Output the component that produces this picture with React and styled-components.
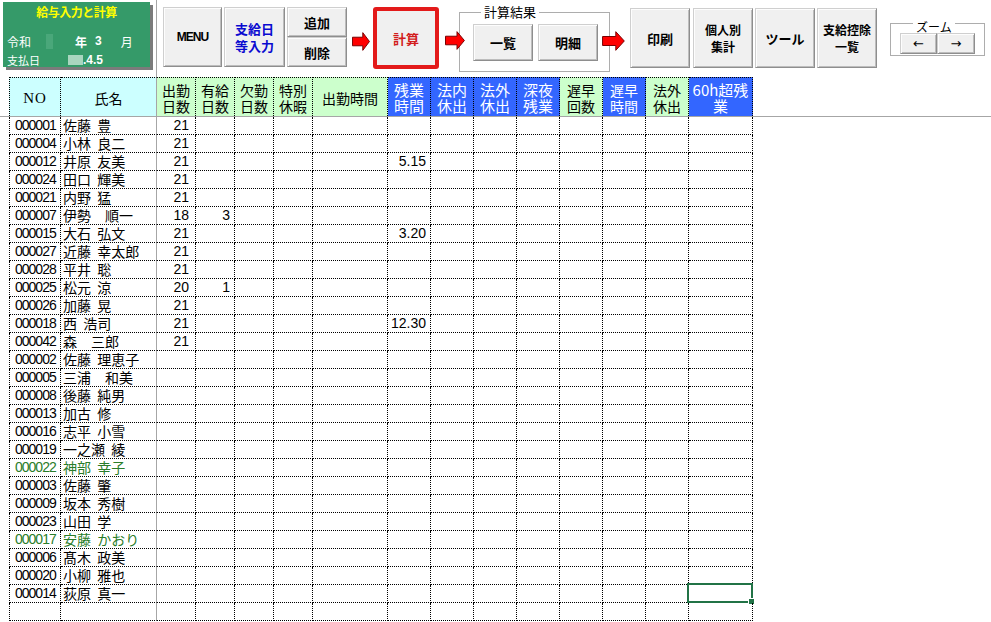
import React from 'react';
import styled, { createGlobalStyle } from 'styled-components';

const Global = createGlobalStyle`
  html, body { margin: 0; padding: 0; background: #fff; }
  body {
    font-family: "Noto Sans CJK JP", "Noto Sans", sans-serif;
    overflow: hidden;
  }
`;

const CJK = '"Noto Sans CJK JP", "Noto Sans", sans-serif';
const DOTTED = '1px dotted #000';
const FREEZE = '1px solid #a6a6a6';
const COLS =
  '9px 52px 96px 39px 39px 39px 39px 75px 43px 43px 43px 43px 43px 43px 43px 64px 1fr';

const Page = styled.div`
  width: 991px;
  height: 622px;
  overflow: hidden;
  background: #fff;
`;

/* ---------- top area ---------- */

const TopArea = styled.div`
  display: flex;
  height: 77px;
`;

const LeftPane = styled.div`
  flex: none;
  width: 157px;
  box-sizing: border-box;
  border-right: ${FREEZE};
  padding: 2px 0 0 3px;
`;

const TitlePanel = styled.div`
  width: 147px;
  height: 65px;
  background: #359a69;
  box-shadow: 3px 3px 0 #7b7b7b;
  color: #fff;
  display: flex;
  flex-direction: column;
  font-family: ${CJK};
`;

const PanelTitle = styled.div`
  height: 20px;
  line-height: 20px;
  text-align: center;
  color: #ffff00;
  font-weight: 700;
  font-size: 12px;
  letter-spacing: -0.5px;
`;

const PanelLine = styled.div`
  display: flex;
  align-items: center;
  height: ${(p) => p.$h}px;
  margin-top: ${(p) => p.$mt || 0}px;
  padding-left: 4px;
  font-size: 12px;
`;

const PanelText = styled.span`
  margin-left: ${(p) => p.$ml || 0}px;
  font-weight: ${(p) => (p.$bold ? 700 : 400)};
  font-size: ${(p) => p.$fs || 12}px;
  font-family: ${(p) => (p.$latin ? '"Liberation Sans", sans-serif' : CJK)};
`;

const HiddenValue = styled.span`
  display: inline-block;
  width: ${(p) => p.$w}px;
  height: ${(p) => p.$h}px;
  margin-left: ${(p) => p.$ml || 0}px;
  background: ${(p) => p.$bg};
`;

const Toolbar = styled.div`
  flex: 1;
  display: flex;
  align-items: flex-start;
  padding-left: 6px;
`;

const Btn = styled.button`
  flex: none;
  box-sizing: border-box;
  width: ${(p) => p.$w}px;
  height: ${(p) => p.$h}px;
  margin-top: ${(p) => p.$top || 0}px;
  margin-left: ${(p) => p.$ml || 0}px;
  padding: 0;
  background: #f0f0f0;
  border: 1px solid;
  border-color: #cfcfcf #8e8e8e #8e8e8e #cfcfcf;
  box-shadow: inset 1px 1px 0 #fdfdfd, inset -1px -1px 0 #bdbdbd;
  color: ${(p) => p.$color || '#000'};
  font-family: ${CJK};
  font-weight: 700;
  font-size: ${(p) => p.$fs || 13}px;
  line-height: 17px;
  display: flex;
  flex-direction: column;
  align-items: center;
  justify-content: center;
  white-space: nowrap;
`;

const MenuLabel = styled.span`
  font-family: "Liberation Sans", sans-serif;
  font-size: 12px;
  letter-spacing: -1px;
`;

const CalcBtn = styled(Btn)`
  border: 4px solid #e31a1a;
  border-radius: 3px;
  box-shadow: none;
`;

const Stack = styled.div`
  flex: none;
  display: flex;
  flex-direction: column;
  margin-top: ${(p) => p.$top}px;
  margin-left: ${(p) => p.$ml}px;
`;

const ArrowBox = styled.svg`
  flex: none;
  position: relative;
  z-index: 1;
  width: ${(p) => p.$w}px;
  height: ${(p) => p.$h}px;
  margin-top: ${(p) => p.$top}px;
  margin-left: ${(p) => p.$ml || 0}px;
  margin-right: ${(p) => p.$mr || 0}px;
`;

const Arrow = (props) => (
  <ArrowBox viewBox="0 0 20 20" preserveAspectRatio="none" {...props}>
    <path
      d="M0.5 5.5 H12 V0.7 L19.4 10 L12 19.3 V14.5 H0.5 Z"
      fill="#ff0000"
      stroke="#7a0000"
      strokeWidth="1"
      vectorEffect="non-scaling-stroke"
    />
  </ArrowBox>
);

const Group = styled.fieldset`
  flex: none;
  box-sizing: border-box;
  width: ${(p) => p.$w}px;
  height: ${(p) => p.$h}px;
  margin: ${(p) => p.$top}px 0 0 ${(p) => p.$ml || 0}px;
  padding: ${(p) => p.$pad};
  min-width: 0;
  border: 1px solid #adadad;
  display: flex;
  gap: ${(p) => p.$gap}px;
  align-items: flex-start;
`;

const Legend = styled.legend`
  margin-left: ${(p) => p.$ml}px;
  padding: ${(p) => p.$pt || 0}px 3px 0;
  font-family: ${CJK};
  font-size: ${(p) => p.$fs}px;
  line-height: ${(p) => p.$lh}px;
  color: #000;
`;

const ZoomBtn = styled(Btn)`
  font-family: "DejaVu Sans", sans-serif;
  font-weight: 400;
  font-size: 13px;
`;

/* ---------- sheet ---------- */

const HeaderRow = styled.div`
  display: grid;
  grid-template-columns: ${COLS};
  height: 40px;
  box-sizing: border-box;
  border-bottom: ${FREEZE};
`;

const HeadCell = styled.div`
  box-sizing: border-box;
  border-top: ${DOTTED};
  border-left: ${(p) => (p.$first ? DOTTED : '0')};
  border-right: ${(p) => (p.$freeze ? FREEZE : DOTTED)};
  background: ${(p) => p.$bg};
  color: ${(p) => p.$fg};
  font-family: ${(p) => (p.$serif ? '"Liberation Serif", serif' : CJK)};
  font-size: ${(p) => p.$fs}px;
  letter-spacing: ${(p) => (p.$serif ? '1px' : '0')};
  line-height: 16px;
  padding-top: 1px;
  display: flex;
  flex-direction: column;
  align-items: center;
  justify-content: center;
  white-space: nowrap;
`;

const Spacer = styled.div``;

const DataRow = styled.div`
  display: grid;
  grid-template-columns: ${COLS};
  height: 18px;
`;

const Cell = styled.div`
  position: relative;
  box-sizing: border-box;
  height: 18px;
  border-bottom: ${DOTTED};
  border-left: ${(p) => (p.$first ? DOTTED : '0')};
  border-right: ${(p) => (p.$freeze ? FREEZE : DOTTED)};
  padding: 0 ${(p) => p.$pr || 0}px 0 ${(p) => p.$pl || 0}px;
  text-align: ${(p) => p.$align || 'left'};
  color: ${(p) => p.$color || '#000'};
  font-family: ${(p) => (p.$num ? '"Liberation Sans", sans-serif' : CJK)};
  font-size: 14px;
  letter-spacing: ${(p) => p.$ls || 0}px;
  word-spacing: ${(p) => p.$ws || 0}px;
  line-height: 17px;
  white-space: nowrap;
`;

const Selection = styled.div`
  position: absolute;
  top: -2px;
  left: -2px;
  right: -1px;
  bottom: -1px;
  border: 2px solid #217346;
  pointer-events: none;
`;

const FillHandle = styled.div`
  position: absolute;
  right: -3px;
  bottom: -3px;
  width: 5px;
  height: 5px;
  background: #217346;
  box-shadow: 0 0 0 1px #fff;
`;

const CYAN = '#ccffff';
const GREEN = '#ccffcc';
const BLUE = '#3366ff';

const headers = [
  { lines: ['NO'], bg: CYAN, serif: true, fs: 15 },
  { lines: ['氏名'], bg: CYAN, freeze: true },
  { lines: ['出勤', '日数'], bg: GREEN },
  { lines: ['有給', '日数'], bg: GREEN },
  { lines: ['欠勤', '日数'], bg: GREEN },
  { lines: ['特別', '休暇'], bg: GREEN },
  { lines: ['出勤時間'], bg: GREEN },
  { lines: ['残業', '時間'], bg: BLUE, fs: 15 },
  { lines: ['法内', '休出'], bg: BLUE, fs: 15 },
  { lines: ['法外', '休出'], bg: BLUE, fs: 15 },
  { lines: ['深夜', '残業'], bg: BLUE, fs: 15 },
  { lines: ['遅早', '回数'], bg: GREEN },
  { lines: ['遅早', '時間'], bg: BLUE },
  { lines: ['法外', '休出'], bg: GREEN },
  { lines: ['60h超残', '業'], bg: BLUE, fs: 15 },
];

const employees = [
  { id: '000001', name: '佐藤 豊', days: '21' },
  { id: '000004', name: '小林 良二', days: '21' },
  { id: '000012', name: '井原 友美', days: '21', over: '5.15' },
  { id: '000024', name: '田口 輝美', days: '21' },
  { id: '000021', name: '内野 猛', days: '21' },
  { id: '000007', name: '伊勢　順一', days: '18', paid: '3' },
  { id: '000015', name: '大石 弘文', days: '21', over: '3.20' },
  { id: '000027', name: '近藤 幸太郎', days: '21' },
  { id: '000028', name: '平井 聡', days: '21' },
  { id: '000025', name: '松元 涼', days: '20', paid: '1' },
  { id: '000026', name: '加藤 晃', days: '21' },
  { id: '000018', name: '西 浩司', days: '21', over: '12.30' },
  { id: '000042', name: '森　三郎', days: '21' },
  { id: '000002', name: '佐藤 理恵子' },
  { id: '000005', name: '三浦　和美' },
  { id: '000008', name: '後藤 純男' },
  { id: '000013', name: '加古 修' },
  { id: '000016', name: '志平 小雪' },
  { id: '000019', name: '一之瀬 綾' },
  { id: '000022', name: '神部 幸子', retired: true },
  { id: '000003', name: '佐藤 肇' },
  { id: '000009', name: '坂本 秀樹' },
  { id: '000023', name: '山田 学' },
  { id: '000017', name: '安藤 かおり', retired: true },
  { id: '000006', name: '髙木 政美' },
  { id: '000020', name: '小柳 雅也' },
  { id: '000014', name: '荻原 真一' },
  { id: '', name: '' },
];

const ACTIVE_ROW = 26;
const ACTIVE_COL = 14;

function SheetRow({ emp, index }) {
  const color = emp.retired ? '#2a7d2a' : '#000';
  const values = [];
  for (let c = 2; c < 15; c += 1) {
    let v = '';
    if (c === 2) v = emp.days || '';
    if (c === 3) v = emp.paid || '';
    if (c === 7) v = emp.over || '';
    values.push(v);
  }
  return (
    <DataRow>
      <Spacer />
      <Cell $first $num $pl={5} $ls={-1} $color={color}>
        {emp.id}
      </Cell>
      <Cell $freeze $pl={2} $ws={3} $color={color}>
        {emp.name}
      </Cell>
      {values.map((v, i) => {
        const col = i + 2;
        const active = index === ACTIVE_ROW && col === ACTIVE_COL;
        return (
          <Cell key={col} $num $align="right" $pr={col === 2 ? 6 : 4}>
            {v}
            {active && (
              <Selection>
                <FillHandle />
              </Selection>
            )}
          </Cell>
        );
      })}
      <Spacer />
    </DataRow>
  );
}

export default function App() {
  return (
    <Page>
      <Global />
      <TopArea>
        <LeftPane>
          <TitlePanel>
            <PanelTitle>給与入力と計算</PanelTitle>
            <PanelLine $h={22} $mt={8}>
              <PanelText>令和</PanelText>
              <HiddenValue $w={7} $h={15} $ml={15} $bg="#4aa77a" />
              <PanelText $bold $ml={22}>年</PanelText>
              <PanelText $bold $latin $ml={8}>3</PanelText>
              <PanelText $ml={19}>月</PanelText>
            </PanelLine>
            <PanelLine $h={15}>
              <PanelText $fs={11}>支払日</PanelText>
              <HiddenValue $w={15} $h={10} $ml={28} $bg="#a9d6bf" />
              <PanelText $bold $latin>.4.5</PanelText>
            </PanelLine>
          </TitlePanel>
        </LeftPane>

        <Toolbar>
          <Btn $w={59} $h={60} $top={7}>
            <MenuLabel>MENU</MenuLabel>
          </Btn>
          <Btn $w={61} $h={60} $top={7} $ml={2} $color="#0a0ad0">
            <span>支給日</span>
            <span>等入力</span>
          </Btn>
          <Stack $top={7} $ml={2}>
            <Btn $w={60} $h={30}>追加</Btn>
            <Btn $w={60} $h={30}>削除</Btn>
          </Stack>
          <Arrow $w={18} $h={19} $top={32} $ml={5} />
          <CalcBtn $w={66} $h={62} $top={7} $ml={3} $color="#d21c1c">
            計算
          </CalcBtn>
          <Arrow $w={20} $h={19} $top={31} $ml={6} $mr={-6} />
          <Group $w={151} $h={68} $top={4} $pad="4px 0 0 13px" $gap={5}>
            <Legend $ml={8} $fs={13} $lh={16}>計算結果</Legend>
            <Btn $w={60} $h={37}>一覧</Btn>
            <Btn $w={60} $h={37}>明細</Btn>
          </Group>
          <Arrow $w={23} $h={20} $top={31} $ml={-8} />
          <Btn $w={60} $h={60} $top={8} $ml={5}>印刷</Btn>
          <Btn $w={60} $h={60} $top={8} $ml={3} $fs={12}>
            <span>個人別</span>
            <span>集計</span>
          </Btn>
          <Btn $w={60} $h={60} $top={8} $ml={2}>ツール</Btn>
          <Btn $w={60} $h={60} $top={8} $ml={2} $fs={12}>
            <span>支給控除</span>
            <span>一覧</span>
          </Btn>
          <Group $w={95} $h={43} $top={13} $ml={13} $pad="0 0 0 9px" $gap={0}>
            <Legend $ml={13} $fs={12} $lh={12} $pt={8}>ズーム</Legend>
            <ZoomBtn $w={37} $h={21}>←</ZoomBtn>
            <ZoomBtn $w={38} $h={21}>→</ZoomBtn>
          </Group>
        </Toolbar>
      </TopArea>

      <HeaderRow>
        <Spacer />
        {headers.map((h, i) => (
          <HeadCell
            key={i}
            $first={i === 0}
            $freeze={h.freeze}
            $serif={h.serif}
            $bg={h.bg}
            $fg={h.bg === BLUE ? '#fff' : '#000'}
            $fs={h.fs || 14}
          >
            {h.lines.map((l) => (
              <span key={l}>{l}</span>
            ))}
          </HeadCell>
        ))}
        <Spacer />
      </HeaderRow>

      {employees.map((emp, i) => (
        <SheetRow key={i} emp={emp} index={i} />
      ))}
    </Page>
  );
}
